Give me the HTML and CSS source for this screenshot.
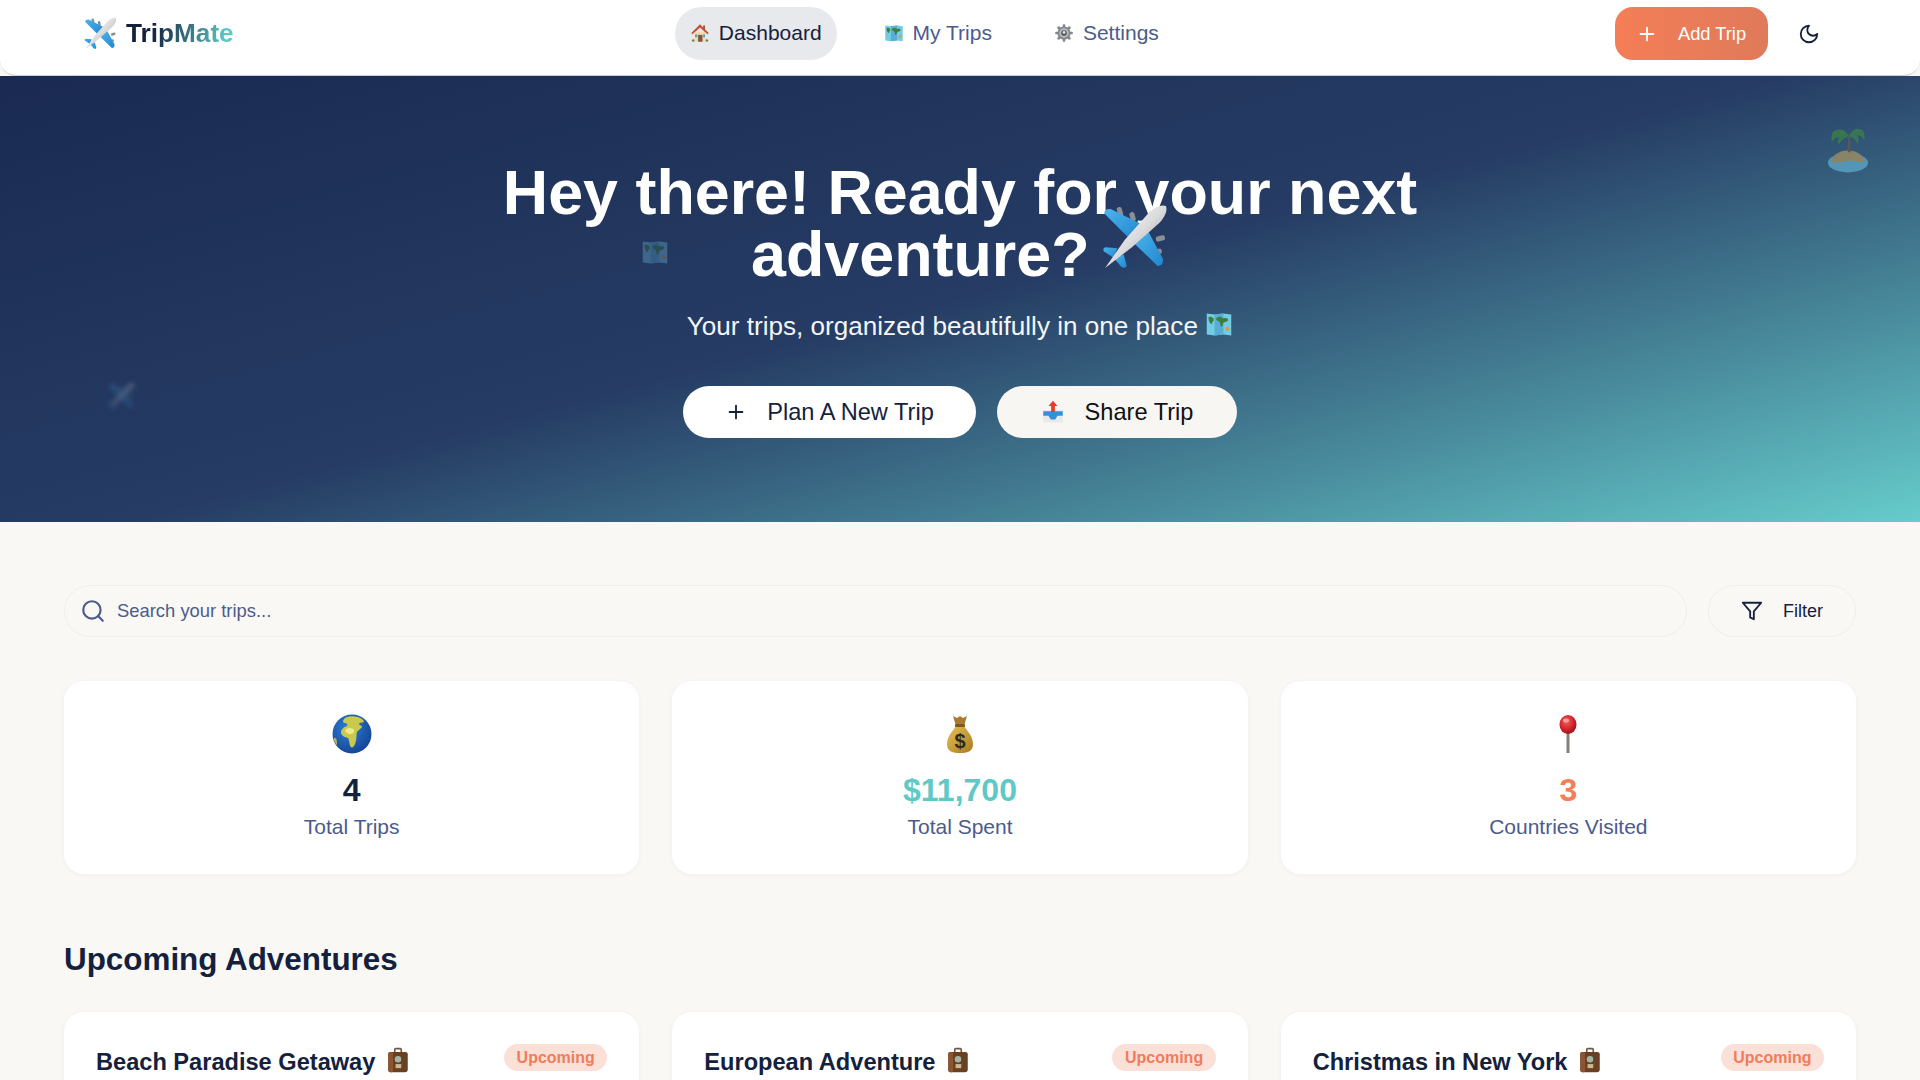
FILE: index.html
```html
<!DOCTYPE html>
<html lang="en">
<head>
<meta charset="utf-8">
<title>TripMate</title>
<link rel="stylesheet" href="styles.css">
</head>
<body>
<svg class="defs" width="0" height="0" aria-hidden="true">
  <defs>
    <linearGradient id="fus" x1="0" y1="0" x2="1" y2="1"><stop offset="0" stop-color="#fbfbfb"/><stop offset=".5" stop-color="#dcdcde"/><stop offset="1" stop-color="#8d8d90"/></linearGradient>
    <linearGradient id="wing" x1="0" y1="0" x2="1" y2="1"><stop offset="0" stop-color="#4db4ee"/><stop offset="1" stop-color="#1f87cf"/></linearGradient>
    <radialGradient id="sea" cx=".4" cy=".35" r=".75"><stop offset="0" stop-color="#2f7fd6"/><stop offset="1" stop-color="#123f8e"/></radialGradient>
    <radialGradient id="ball" cx=".42" cy=".35" r=".7"><stop offset="0" stop-color="#f0605c"/><stop offset=".6" stop-color="#d2222a"/><stop offset="1" stop-color="#8e1118"/></radialGradient>
    <linearGradient id="bag" x1="0" y1="0" x2="1" y2="1"><stop offset="0" stop-color="#e9c35c"/><stop offset="1" stop-color="#a97a1e"/></linearGradient>
    <symbol id="i-plane" viewBox="0 0 64 64">
      <rect x="15" y="3" width="5" height="9" rx="2" fill="#8a8f96" transform="rotate(-15 17 8)"/>
      <rect x="27" y="8" width="5" height="9" rx="2" fill="#8a8f96" transform="rotate(-15 29 12)"/>
      <rect x="52" y="31" width="9" height="5" rx="2" fill="#8a8f96" transform="rotate(-15 56 33)"/>
      <rect x="49" y="44" width="9" height="5" rx="2" fill="#8a8f96" transform="rotate(-15 53 46)"/>
      <path d="M37 19 9 5Q3 4 2 9L26 33Z" fill="url(#wing)"/>
      <path d="M45 27 59 53Q60 60 54 60L31 38Z" fill="url(#wing)"/>
      <path d="M15 43 3 42Q0 44 2 46l9 6Z" fill="url(#wing)"/>
      <path d="M21 49 24 60Q22 63 19 61l-7-8Z" fill="url(#wing)"/>
      <path d="M62 2C58 0 51 3 45 9L22 35 3 62 29 42 55 19C60 14 64 7 62 2Z" fill="url(#fus)"/>
    </symbol>
    <symbol id="i-house" viewBox="0 0 32 32">
      <rect x="7" y="14" width="18" height="16" fill="#f0dcb4"/>
      <path d="M16 2 2 16l2 2L16 7l12 11 2-2Z" fill="#c9502f"/>
      <rect x="21" y="4" width="3" height="7" fill="#9a5a3a"/>
      <rect x="13" y="19" width="7" height="11" fill="#7a5a44"/>
      <rect x="8" y="18" width="4" height="5" fill="#6fa3c9"/>
      <rect x="21" y="18" width="3" height="5" fill="#6fa3c9"/>
      <rect x="3" y="26" width="4" height="4" rx="2" fill="#5a8a3a"/><rect x="25" y="26" width="4" height="4" rx="2" fill="#5a8a3a"/>
    </symbol>
    <symbol id="i-map" viewBox="0 0 32 32">
      <path d="M2 4l9 1 10-1 9 1v24l-9-1-10 1-9-1Z" fill="#74cbe6"/>
      <path d="M11 5v24l10-1V4Z" fill="#56aed4"/>
      <path d="M4 8c4-1 6 1 6 3s-2 2-2 5c-2 0-4-3-4-8ZM13 9c3-2 6-1 7 0s4-1 6 1-2 4-4 4-1 4-3 5c-2-1-1-5-3-6s-4-2-3-4Z" fill="#3f7f3a"/>
      <path d="M25 19c2 0 3 1 3 3s-3 2-4 1 0-4 1-4Z" fill="#c9a04a"/>
    </symbol>
    <symbol id="i-gear" viewBox="0 0 32 32">
      <g fill="#83878c"><circle cx="16" cy="16" r="10.5"/>
        <g><rect x="14" y="2" width="4" height="28" rx="1"/><rect x="14" y="2" width="4" height="28" rx="1" transform="rotate(45 16 16)"/><rect x="14" y="2" width="4" height="28" rx="1" transform="rotate(90 16 16)"/><rect x="14" y="2" width="4" height="28" rx="1" transform="rotate(135 16 16)"/></g>
      </g>
      <circle cx="16" cy="16" r="7.5" fill="#b9bcc0"/><circle cx="16" cy="16" r="4.5" fill="#54585e"/><circle cx="16" cy="15" r="2.2" fill="#e4e6e8"/>
    </symbol>
    <symbol id="i-tray" viewBox="0 0 32 32">
      <path d="M3 13h26v17H3Z" fill="#e9e9ec"/>
      <path d="M3 15h26v6h-7l-3 5h-6l-3-5H3Z" fill="#2f92dc"/>
      <path d="M16 1l6 7h-3.500v8h-5V8H10Z" fill="#e2402f"/>
    </symbol>
    <symbol id="i-globe" viewBox="0 0 40 40">
      <circle cx="20" cy="20" r="19.500" fill="url(#sea)"/>
      <path d="M13 4c3-2 9-2 13-1 3 1 6 3 6 5-2 1-4 0-5 2-1 1 3 1 3 3-1 2-4 3-5 5-1 3 0 8-2 12-1 3-3 4-4 3-2-2-1-6-3-9-2-1-6-1-7-5 0-4 3-6 6-7 1-1 0-3-2-3s-3-2 0-5Z" fill="#c9c94e"/>
      <path d="M14 15c4-2 7-1 8 1s-2 5-5 4-5-3-3-5Z" fill="#f0ea8a"/>
      <path d="M2 24c2-1 3 2 3 5 0 2 0 3-1 1-1-2-3-4-2-6Z" fill="#b9b858"/>
    </symbol>
    <symbol id="i-bag" viewBox="0 0 32 40">
      <path d="M9 2l4 2 3-2 3 2 4-2-3 10h-8Z" fill="#a87c2e"/>
      <path d="M12 11h8c1 4 9 10 9 19 0 8-6 9-13 9S3 38 3 30c0-9 8-15 9-19Z" fill="url(#bag)"/>
      <rect x="11" y="10" width="10" height="3" rx="1" fill="#7d5a1c"/>
      <text x="16" y="34" text-anchor="middle" class="bag-sign">$</text>
    </symbol>
    <symbol id="i-pin" viewBox="0 0 24 40">
      <rect x="10.500" y="18" width="3" height="21" fill="#85807a"/>
      <ellipse cx="12" cy="10.500" rx="8.500" ry="9.500" fill="url(#ball)"/>
      <ellipse cx="10" cy="6.500" rx="3" ry="2" fill="#f5a09a"/>
    </symbol>
    <symbol id="i-case" viewBox="0 0 32 32">
      <path d="M11 7V3q0-2 2-2h6q2 0 2 2v4h-2V3h-6v4Z" fill="#6e5a4a"/>
      <rect x="4" y="6" width="24" height="25" rx="3" fill="#6b3f23"/>
      <rect x="4" y="6" width="6" height="25" rx="2" fill="#8a5530"/>
      <circle cx="16" cy="15" r="4" fill="#9db7a8"/><rect x="13" y="21" width="7" height="5" fill="#cdb98a"/>
    </symbol>
    <symbol id="i-island" viewBox="0 0 44 48">
      <ellipse cx="22" cy="38" rx="21" ry="10" fill="#6cc0e0"/>
      <path d="M4 36c3-8 11-11 18-11s15 3 18 11c-6 3-11-1-18 0s-12 3-18 0Z" fill="#c8a45c"/>
      <path d="M22 10c1 6-1 10 0 17h3c-1-7 0-11-1-17Z" fill="#7a5a3a"/>
      <path d="M23 10C19 2 12 2 7 5c-2 2-3 7-2 12 2-5 6-6 8-6-2 2-2 5-1 8 2-4 5-7 11-9Zm0 0c3-7 9-9 14-6 2 2 3 6 2 10-2-4-5-5-7-5 2 3 1 6 0 9-2-4-4-6-9-8Z" fill="#3f8f3a"/>
    </symbol>
  </defs>
</svg>

<div class="app">
  <nav class="nav">
    <a class="logo"><svg class="logo-icon"><use href="#i-plane"/></svg><span class="logo-text">TripMate</span></a>
    <div class="nav-links">
      <a class="nav-link active"><svg class="nav-icon"><use href="#i-house"/></svg>Dashboard</a>
      <a class="nav-link"><svg class="nav-icon"><use href="#i-map"/></svg>My Trips</a>
      <a class="nav-link"><svg class="nav-icon"><use href="#i-gear"/></svg>Settings</a>
    </div>
    <div class="nav-right">
      <button class="add-btn"><svg class="plus" viewBox="0 0 24 24"><path d="M5 12h14M12 5v14"/></svg>Add Trip</button>
      <button class="theme-btn"><svg class="moon" viewBox="0 0 24 24"><path d="M12 3a6 6 0 0 0 9 9 9 9 0 1 1-9-9Z"/></svg></button>
    </div>
  </nav>

  <header class="hero">
    <svg class="float float-map"><use href="#i-map"/></svg>
    <svg class="float float-island"><use href="#i-island"/></svg>
    <svg class="float float-plane"><use href="#i-plane"/></svg>
    <h1 class="hero-title">Hey there! Ready for your next adventure? <svg class="hero-plane"><use href="#i-plane"/></svg></h1>
    <p class="hero-sub">Your trips, organized beautifully in one place <svg class="sub-map"><use href="#i-map"/></svg></p>
    <div class="hero-actions">
      <button class="hero-btn btn-plan"><svg class="plus plus-dark" viewBox="0 0 24 24"><path d="M5 12h14M12 5v14"/></svg>Plan A New Trip</button>
      <button class="hero-btn btn-share"><svg class="tray-icon"><use href="#i-tray"/></svg>Share Trip</button>
    </div>
  </header>

  <main class="main">
    <div class="search-row">
      <label class="search">
        <svg class="search-icon" viewBox="0 0 24 24"><circle cx="11" cy="11" r="8"/><path d="m21 21-4.300-4.300"/></svg>
        <span class="search-text">Search your trips...</span>
      </label>
      <button class="filter"><svg class="filter-icon" viewBox="0 0 24 24"><path d="M22 3H2l8 9.460V19l4 2v-8.540Z"/></svg>Filter</button>
    </div>

    <section class="stats">
      <div class="stat"><svg class="stat-icon"><use href="#i-globe"/></svg><div class="stat-value navy">4</div><div class="stat-label">Total Trips</div></div>
      <div class="stat"><svg class="stat-icon"><use href="#i-bag"/></svg><div class="stat-value teal">$11,700</div><div class="stat-label">Total Spent</div></div>
      <div class="stat"><svg class="stat-icon"><use href="#i-pin"/></svg><div class="stat-value coral">3</div><div class="stat-label">Countries Visited</div></div>
    </section>

    <h2 class="section-title">Upcoming Adventures</h2>

    <section class="trips">
      <article class="trip"><div class="trip-head"><h3 class="trip-title">Beach Paradise Getaway <svg class="case"><use href="#i-case"/></svg></h3><span class="badge">Upcoming</span></div></article>
      <article class="trip"><div class="trip-head"><h3 class="trip-title">European Adventure <svg class="case"><use href="#i-case"/></svg></h3><span class="badge">Upcoming</span></div></article>
      <article class="trip"><div class="trip-head"><h3 class="trip-title">Christmas in New York <svg class="case"><use href="#i-case"/></svg></h3><span class="badge">Upcoming</span></div></article>
    </section>
  </main>
</div>
</body>
</html>
```

FILE: styles.css
```css
* { box-sizing: border-box; }
html, body { margin: 0; height: 100%; overflow: hidden; }
body { background: #faf8f5; font-family: "Liberation Sans", Arial, sans-serif; color: #14213d; }
.defs { position: absolute; }
.bag-sign { font: bold 20px "Liberation Sans", sans-serif; fill: #2f2a20; }
.app { height: 1080px; overflow: hidden; }

.nav { height: 76px; background: #fff; display: flex; align-items: flex-start; justify-content: space-between; padding: 7px 100px 0 83px; border-bottom: 1px solid #c9cdd8; border-radius: 0 0 16px 16px; }
.logo { display: flex; align-items: center; gap: 8px; height: 53px; }
.logo-icon { width: 35px; height: 33px; }
.logo-text { font-size: 26.200px; font-weight: 700; background: linear-gradient(100deg, #14213d 25%, #5fc9c8 92%); -webkit-background-clip: text; background-clip: text; color: transparent; }
.nav-links { display: flex; gap: 32px; }
.nav-link { display: flex; align-items: center; gap: 9px; height: 53px; padding: 0 15px 2px; border-radius: 27px; font-size: 21px; color: #4a5c8c; }
.nav-link.active { background: #e8e9ed; color: #14213d; }
.nav-icon { width: 20px; height: 20px; }
.nav-right { display: flex; align-items: center; gap: 30px; height: 53px; }
.add-btn { display: flex; align-items: center; gap: 20px; width: 153px; height: 53px; padding: 0 21px; border: 0; border-radius: 18px; background: linear-gradient(90deg, #f47e57, #df7a5a); color: #fff; font: 18.300px "Liberation Sans", sans-serif; }
.plus { width: 22px; height: 22px; fill: none; stroke: #fff; stroke-width: 2; stroke-linecap: round; flex: none; }
.plus-dark { stroke: #14213d; }
.theme-btn { display: flex; padding: 0; border: 0; background: none; }
.moon { width: 22px; height: 22px; fill: none; stroke: #14213d; stroke-width: 2; stroke-linecap: round; stroke-linejoin: round; }

.hero { position: relative; height: 446px; padding-top: 85px; background: linear-gradient(165deg, #1a2a52 0%, #263c64 50%, #66cccb 100%); text-align: center; color: #fff; overflow: hidden; }
.hero-title { width: 960px; margin: 0 auto; font-size: 62.800px; line-height: 62px; font-weight: 700; }
.hero-plane { width: 68px; height: 66px; margin: -30px 0 -4px -6px; vertical-align: 10px; }
.hero-sub { margin: 25px 0 0; font-size: 26.100px; line-height: 30px; color: #f3f6f8; }
.sub-map { width: 28px; height: 28px; vertical-align: -3px; }
.hero-actions { display: flex; justify-content: center; gap: 21px; margin-top: 45px; }
.hero-btn { display: flex; align-items: center; justify-content: center; height: 52px; border: 0; border-radius: 26px; color: #14213d; font: 23.600px "Liberation Sans", sans-serif; }
.btn-plan { width: 293px; gap: 20px; background: #fff; }
.btn-share { width: 240px; gap: 20px; background: #f8f6f2; color: #111; }
.tray-icon { width: 24px; height: 24px; }
.float { position: absolute; }
.float-map { left: 639px; top: 162px; width: 32px; height: 28px; opacity: .32; }
.float-island { left: 1827px; top: 50px; width: 42px; height: 47px; opacity: .58; }
.float-plane { left: 100px; top: 306px; width: 42px; height: 28px; opacity: .22; filter: blur(2.500px); }

.main { padding: 63px 64px 0; }
.search-row { display: flex; gap: 21px; }
.search { flex: 1; display: flex; align-items: center; gap: 11px; height: 52px; padding: 0 15px; border: 1px solid #f0eeea; border-radius: 26px; background: #faf8f5; }
.search-icon { width: 26px; height: 26px; fill: none; stroke: #4a5c8c; stroke-width: 2; stroke-linecap: round; }
.search-text { font-size: 18.400px; color: #4a5c8c; }
.filter { display: flex; align-items: center; gap: 20px; width: 148px; height: 52px; padding: 0 32px; border: 1px solid #f0eeea; border-radius: 26px; background: #faf8f5; color: #14213d; font: 18px "Liberation Sans", sans-serif; }
.filter-icon { width: 22px; height: 22px; fill: none; stroke: #14213d; stroke-width: 2; stroke-linejoin: round; flex: none; }

.stats { display: grid; grid-template-columns: repeat(3, 1fr); gap: 33px; margin-top: 44px; }
.stat { height: 193px; padding-top: 33px; border-radius: 20px; background: #fff; box-shadow: 0 1px 5px rgba(60, 50, 30, .05); text-align: center; display: flex; flex-direction: column; align-items: center; }
.stat-icon { width: 40px; height: 40px; }
.stat-value { margin-top: 18px; font-size: 32px; line-height: 36px; font-weight: 700; }
.navy { color: #14213d; }
.teal { color: #5fc9c8; }
.coral { color: #f47e57; }
.stat-label { margin-top: 7px; font-size: 21px; line-height: 24px; color: #4a5c8c; }

.section-title { margin: 66px 0 0; font-size: 31.400px; line-height: 40px; font-weight: 700; color: #14213d; }
.trips { display: grid; grid-template-columns: repeat(3, 1fr); gap: 33px; margin-top: 32px; }
.trip { height: 320px; padding: 32px; border-radius: 20px; background: #fff; box-shadow: 0 1px 5px rgba(60, 50, 30, .06); }
.trip-head { display: flex; justify-content: space-between; align-items: flex-start; }
.trip-title { margin: 0; font-size: 23.600px; line-height: 36px; font-weight: 700; color: #14213d; }
.case { width: 26px; height: 26px; vertical-align: -3px; margin-left: 3px; }
.badge { padding: 0 12.500px; height: 27px; border-radius: 14px; background: #fbe0d8; color: #f27c5a; font-size: 16px; line-height: 27px; font-weight: 700; }
```
